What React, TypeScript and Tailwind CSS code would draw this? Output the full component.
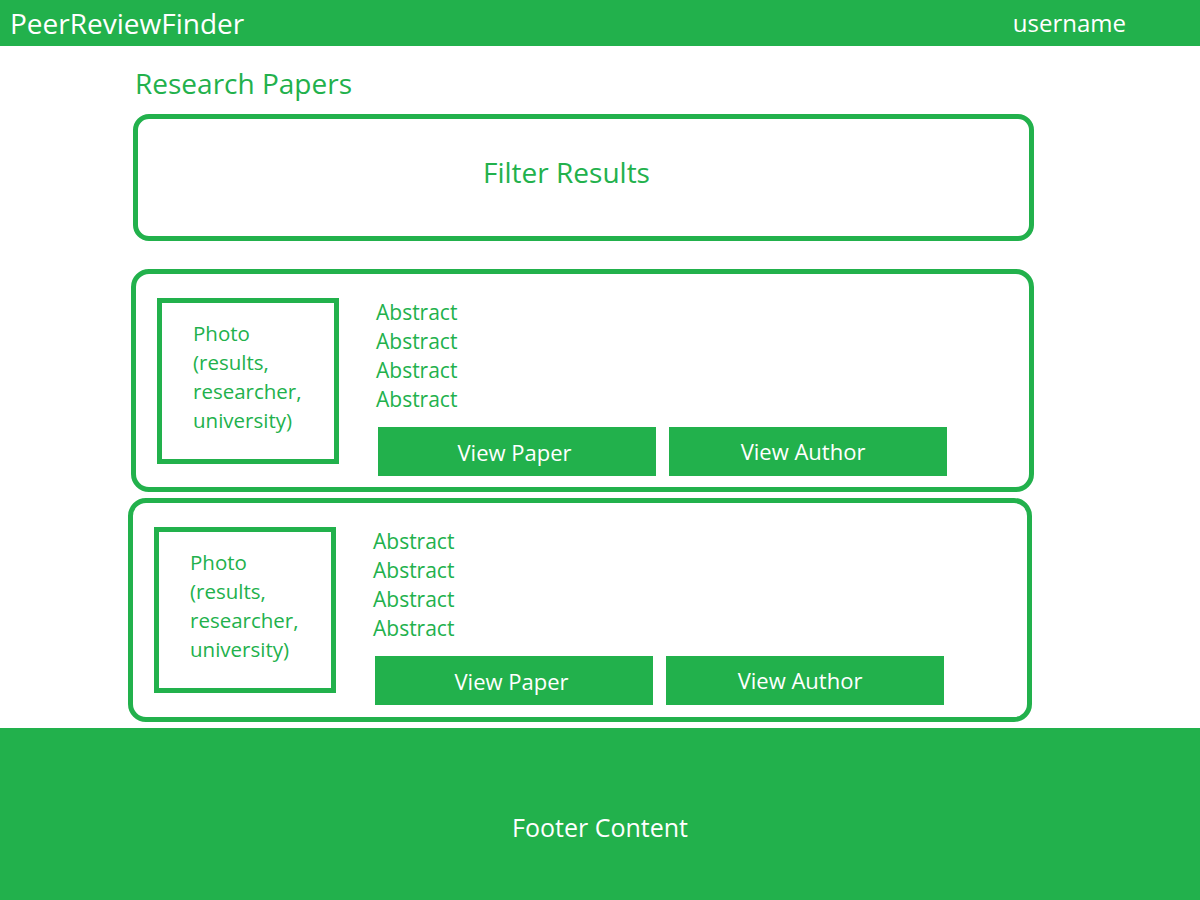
import React from 'react';

const green = 'text-[#22b14c]';

const PaperCard: React.FC<{ className?: string }> = ({ className = '' }) => {
  return (
    <div className={`flex border-[5px] border-[#22b14c] rounded-[18px] ${className}`}>
      {/* Photo placeholder */}
      <div className="ml-[21px] mt-[24px] w-[182px] h-[166px] border-[5px] border-[#22b14c] pl-[31px] pt-[16px]">
        <p className={`text-[20.5px] leading-[29px] ${green}`}>
          Photo
          <br />
          (results,
          <br />
          researcher,
          <br />
          university)
        </p>
      </div>

      {/* Abstract + actions */}
      <div className="ml-[37px] mt-[24px] flex flex-col">
        <div className={`text-[21px] leading-[29px] ${green}`}>
          <p>Abstract</p>
          <p>Abstract</p>
          <p>Abstract</p>
          <p>Abstract</p>
        </div>
        <div className="flex gap-[13px] mt-[13px] ml-[2px]">
          <button className="w-[278px] h-[49px] bg-[#22b14c] text-white text-[22px] pt-[2px] pr-[5px]">View Paper</button>
          <button className="w-[278px] h-[49px] bg-[#22b14c] text-white text-[22px] pr-[10px]">View Author</button>
        </div>
      </div>
    </div>
  );
};

const App: React.FC = () => {
  return (
    <div className="w-[1200px] h-[900px] flex flex-col bg-white font-['Open_Sans',sans-serif]">
      {/* Header */}
      <header className="h-[46px] bg-[#22b14c] flex items-center justify-between pl-[10px] pr-[74px] text-white">
        <h1 className="text-[28px] leading-none">PeerReviewFinder</h1>
        <span className="text-[24px] leading-none">username</span>
      </header>

      {/* Content */}
      <main className="flex-1 flex flex-col">
        <h2 className={`ml-[135px] mt-[20px] text-[28px] leading-[34px] ${green}`}>Research Papers</h2>

        <div className="ml-[133px] mt-[14px] w-[901px] h-[127px] border-[5px] border-[#22b14c] rounded-[16px] flex justify-center pt-[39px]">
          <span className={`text-[28px] leading-none ml-[-34px] ${green}`}>Filter Results</span>
        </div>

        <PaperCard className="ml-[131px] mt-[28px] w-[903px] h-[223px]" />
        <PaperCard className="ml-[128px] mt-[6px] w-[904px] h-[224px]" />
      </main>

      {/* Footer */}
      <footer className="h-[172px] bg-[#22b14c] flex justify-center pt-[87px] text-white">
        <span className="text-[25px] leading-none">Footer Content</span>
      </footer>
    </div>
  );
};

export default App;
